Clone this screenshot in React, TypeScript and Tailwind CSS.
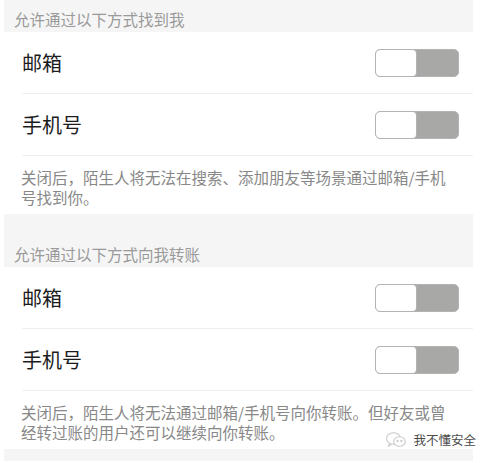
const font = { fontFamily: '"Noto Sans CJK SC", "Noto Sans", sans-serif' };

type Section = {
  title: string;
  note: string;
};

const sections: Section[] = [
  {
    title: '允许通过以下方式找到我',
    note: '关闭后，陌生人将无法在搜索、添加朋友等场景通过邮箱/手机号找到你。',
  },
  {
    title: '允许通过以下方式向我转账',
    note: '关闭后，陌生人将无法通过邮箱/手机号向你转账。但好友或曾经转过账的用户还可以继续向你转账。',
  },
];

function Toggle() {
  return (
    <div className="flex h-[28px] w-[84px] overflow-hidden rounded-[5px] border border-[#b3b3b3] bg-[#a8a8a6]">
      <div className="h-full w-[41px] rounded-[4px] border-r border-[#b3b3b3] bg-white" />
    </div>
  );
}

function Row({ label }: { label: string }) {
  return (
    <div className="pl-[18px]">
      <div className="flex h-[62px] items-center justify-between border-b border-[#efefef] pr-[14px]">
        <span className="text-[20px] leading-none text-[#1c1c1c]">{label}</span>
        <Toggle />
      </div>
    </div>
  );
}

function WeChatMark() {
  return (
    <div className="absolute bottom-[14px] right-[14px] flex items-center gap-[6px]">
      <svg width="22" height="18" viewBox="0 0 22 18" fill="none" stroke="#c9c9c9" strokeWidth="1.1">
        <ellipse cx="8.5" cy="7.5" rx="7" ry="5.8" />
        <path d="M4.5 12.2 L3.6 15 L6.8 13.2" />
        <ellipse cx="14.5" cy="10.5" rx="5.8" ry="4.8" fill="white" />
        <circle cx="12.6" cy="10" r="0.6" fill="#c9c9c9" />
        <circle cx="16.4" cy="10" r="0.6" fill="#c9c9c9" />
      </svg>
      <span className="text-[12.5px] leading-none text-[#4a4a4a] [text-shadow:0_0_2px_#fff]">我不懂安全</span>
    </div>
  );
}

export default function App() {
  return (
    <div className="relative h-[463px] w-[490px] overflow-hidden bg-white" style={font}>
      <div className="ml-[4px] w-[469px] bg-[#f5f5f5] pb-[12px]">
        {sections.map((s, i) => (
          <div key={s.title} className={i > 0 ? 'pt-[21px]' : ''}>
            <div className="h-[32px] pl-[10px] pt-[10px] text-[15.5px] leading-[18px] text-[#9a9a9a]">{s.title}</div>
            <div className="bg-white">
              <Row label="邮箱" />
              <Row label="手机号" />
              <p className="h-[58px] pl-[17px] pr-[18px] pt-[11px] text-[15.5px] leading-[20px] text-[#888]">
                {s.note}
              </p>
            </div>
          </div>
        ))}
      </div>
      <WeChatMark />
    </div>
  );
}
